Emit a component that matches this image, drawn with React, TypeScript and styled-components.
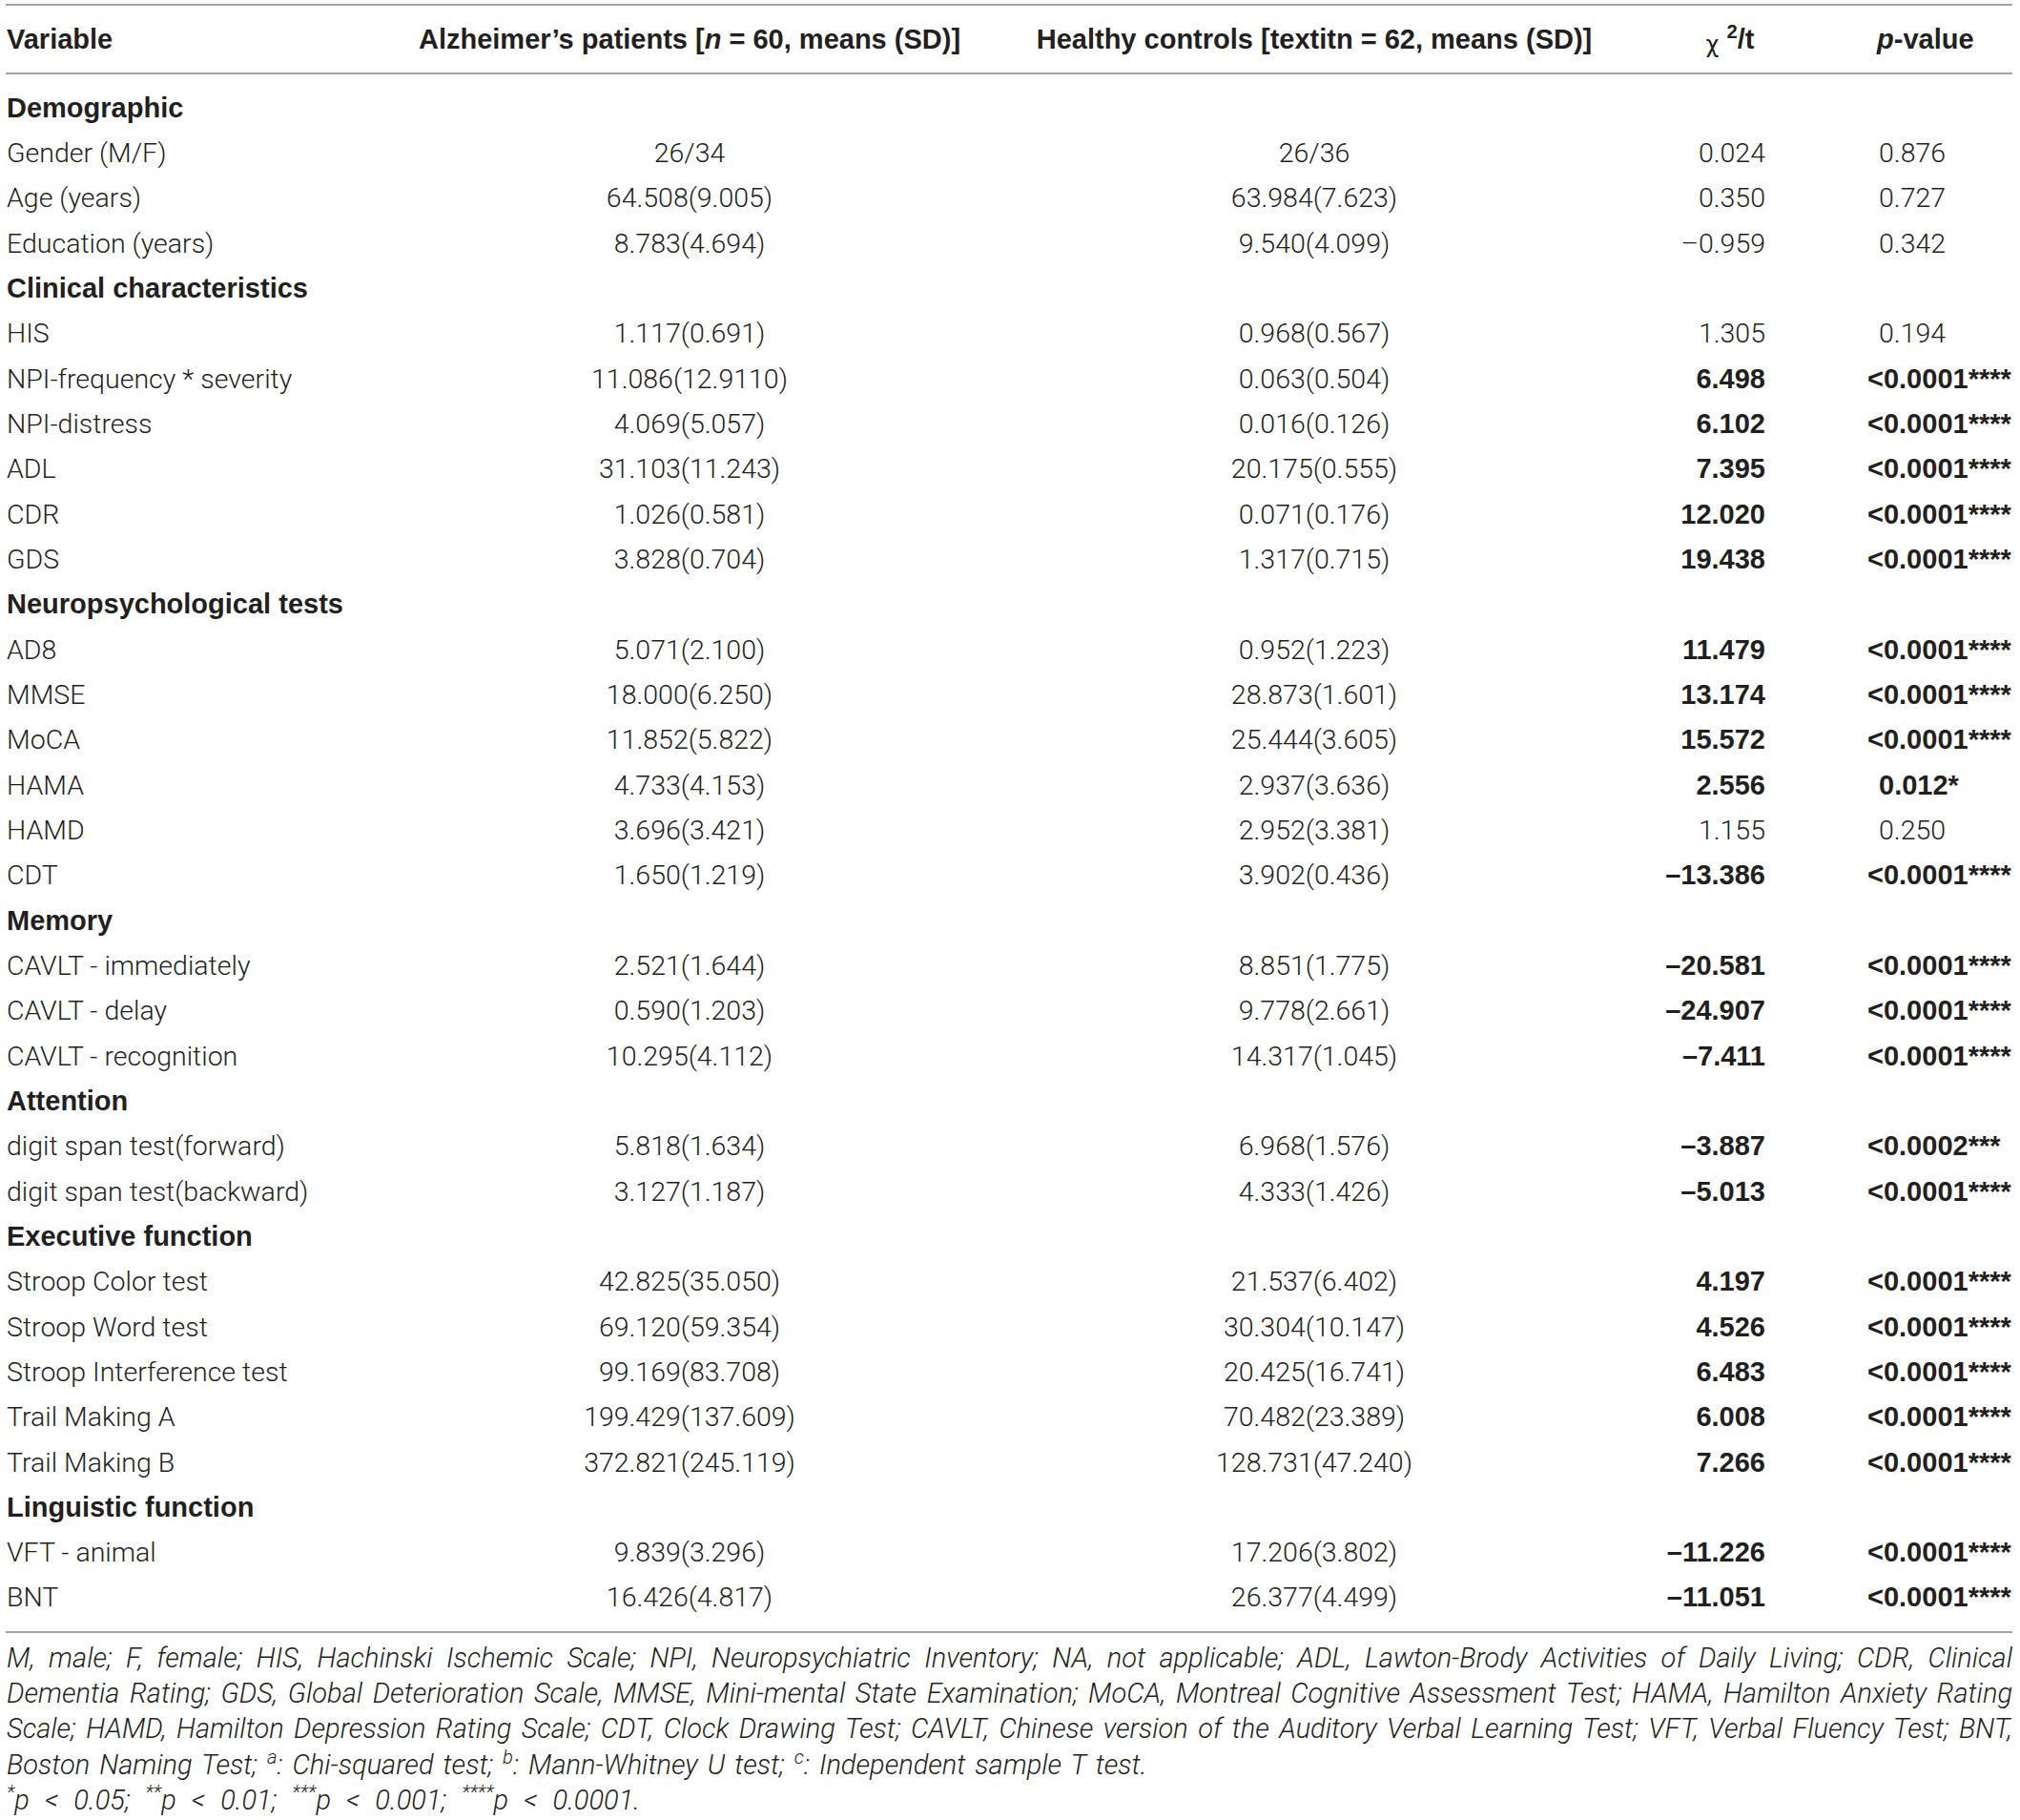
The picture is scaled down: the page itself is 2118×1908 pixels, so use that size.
import React from "react";
import styled, { createGlobalStyle } from "styled-components";

const GlobalStyle = createGlobalStyle`
  body {
    margin: 0;
    background: #ffffff;
    font-family: Roboto, "Liberation Sans", Arial, sans-serif;
    color: #231f20;
  }
`;

const COLS = "424px 586px 724px 148px 222px";
const BOLD = `"Liberation Sans", Arial, sans-serif`;

const Page = styled.div`
  padding: 4px 8px 0 6px;
  width: 2104px;
`;

const Head = styled.div`
  display: grid;
  grid-template-columns: ${COLS};
  align-items: center;
  height: 70px;
  border-top: 2px solid #a3a3a3;
  border-bottom: 2px solid #a3a3a3;
  font-family: ${BOLD};
  font-size: 29px;
  font-weight: 700;
`;

const HeadCell = styled.div<{ $align?: string; $pl?: number }>`
  text-align: ${(p) => p.$align || "center"};
  padding-left: ${(p) => p.$pl || 0}px;
  white-space: nowrap;
`;

const Chi = styled.span`
  font-weight: 400;
  font-family: "DejaVu Sans", sans-serif;
  font-size: 24px;
  position: relative;
  top: 4px;
`;

const Sup = styled.sup`
  font-size: 0.7em;
  line-height: 0;
`;

const Body = styled.div`
  padding: 11.5px 0 11px;
  border-bottom: 2px solid #a3a3a3;
`;

const Row = styled.div`
  display: grid;
  grid-template-columns: ${COLS};
  align-items: center;
  height: 47.33px;
  font-size: 28.5px;
  font-weight: 300;
  white-space: nowrap;
`;

const Label = styled.div`
  padding-left: 1px;
`;

const GroupLabel = styled.div`
  padding-left: 1px;
  font-family: ${BOLD};
  font-size: 29px;
  font-weight: 700;
`;

const Mid = styled.div`
  text-align: center;
`;

const Stat = styled.div<{ $bold?: boolean }>`
  text-align: right;
  padding-right: 37px;
  font-family: ${(p) => (p.$bold ? BOLD : "inherit")};
  font-size: ${(p) => (p.$bold ? 29 : 28.5)}px;
  font-weight: ${(p) => (p.$bold ? 700 : 300)};
`;

const PVal = styled.div<{ $bold?: boolean; $lt?: boolean }>`
  text-align: left;
  padding-left: ${(p) => (p.$lt ? 70 : 82)}px;
  font-family: ${(p) => (p.$bold ? BOLD : "inherit")};
  font-size: ${(p) => (p.$bold ? 29 : 28.5)}px;
  font-weight: ${(p) => (p.$bold ? 700 : 300)};
`;

const Notes = styled.div`
  padding-top: 8px;
  font-size: 29px;
  font-style: italic;
  font-weight: 300;
  line-height: 37.3px;
`;

const NoteLine = styled.div<{ $justify?: boolean; $spacing?: number }>`
  text-align: ${(p) => (p.$justify ? "justify" : "left")};
  text-align-last: ${(p) => (p.$justify ? "justify" : "auto")};
  word-spacing: ${(p) => p.$spacing || 0}px;
  white-space: nowrap;
  padding-left: 1px;
`;

type Item =
  | { group: string }
  | { label: string; a: string; b: string; t: string; p: string; bold?: boolean };

const data: Item[] = [
  { group: "Demographic" },
  { label: "Gender (M/F)", a: "26/34", b: "26/36", t: "0.024", p: "0.876" },
  { label: "Age (years)", a: "64.508(9.005)", b: "63.984(7.623)", t: "0.350", p: "0.727" },
  { label: "Education (years)", a: "8.783(4.694)", b: "9.540(4.099)", t: "–0.959", p: "0.342" },
  { group: "Clinical characteristics" },
  { label: "HIS", a: "1.117(0.691)", b: "0.968(0.567)", t: "1.305", p: "0.194" },
  { label: "NPI-frequency * severity", a: "11.086(12.9110)", b: "0.063(0.504)", t: "6.498", p: "<0.0001****", bold: true },
  { label: "NPI-distress", a: "4.069(5.057)", b: "0.016(0.126)", t: "6.102", p: "<0.0001****", bold: true },
  { label: "ADL", a: "31.103(11.243)", b: "20.175(0.555)", t: "7.395", p: "<0.0001****", bold: true },
  { label: "CDR", a: "1.026(0.581)", b: "0.071(0.176)", t: "12.020", p: "<0.0001****", bold: true },
  { label: "GDS", a: "3.828(0.704)", b: "1.317(0.715)", t: "19.438", p: "<0.0001****", bold: true },
  { group: "Neuropsychological tests" },
  { label: "AD8", a: "5.071(2.100)", b: "0.952(1.223)", t: "11.479", p: "<0.0001****", bold: true },
  { label: "MMSE", a: "18.000(6.250)", b: "28.873(1.601)", t: "13.174", p: "<0.0001****", bold: true },
  { label: "MoCA", a: "11.852(5.822)", b: "25.444(3.605)", t: "15.572", p: "<0.0001****", bold: true },
  { label: "HAMA", a: "4.733(4.153)", b: "2.937(3.636)", t: "2.556", p: "0.012*", bold: true },
  { label: "HAMD", a: "3.696(3.421)", b: "2.952(3.381)", t: "1.155", p: "0.250" },
  { label: "CDT", a: "1.650(1.219)", b: "3.902(0.436)", t: "–13.386", p: "<0.0001****", bold: true },
  { group: "Memory" },
  { label: "CAVLT - immediately", a: "2.521(1.644)", b: "8.851(1.775)", t: "–20.581", p: "<0.0001****", bold: true },
  { label: "CAVLT - delay", a: "0.590(1.203)", b: "9.778(2.661)", t: "–24.907", p: "<0.0001****", bold: true },
  { label: "CAVLT - recognition", a: "10.295(4.112)", b: "14.317(1.045)", t: "–7.411", p: "<0.0001****", bold: true },
  { group: "Attention" },
  { label: "digit span test(forward)", a: "5.818(1.634)", b: "6.968(1.576)", t: "–3.887", p: "<0.0002***", bold: true },
  { label: "digit span test(backward)", a: "3.127(1.187)", b: "4.333(1.426)", t: "–5.013", p: "<0.0001****", bold: true },
  { group: "Executive function" },
  { label: "Stroop Color test", a: "42.825(35.050)", b: "21.537(6.402)", t: "4.197", p: "<0.0001****", bold: true },
  { label: "Stroop Word test", a: "69.120(59.354)", b: "30.304(10.147)", t: "4.526", p: "<0.0001****", bold: true },
  { label: "Stroop Interference test", a: "99.169(83.708)", b: "20.425(16.741)", t: "6.483", p: "<0.0001****", bold: true },
  { label: "Trail Making A", a: "199.429(137.609)", b: "70.482(23.389)", t: "6.008", p: "<0.0001****", bold: true },
  { label: "Trail Making B", a: "372.821(245.119)", b: "128.731(47.240)", t: "7.266", p: "<0.0001****", bold: true },
  { group: "Linguistic function" },
  { label: "VFT - animal", a: "9.839(3.296)", b: "17.206(3.802)", t: "–11.226", p: "<0.0001****", bold: true },
  { label: "BNT", a: "16.426(4.817)", b: "26.377(4.499)", t: "–11.051", p: "<0.0001****", bold: true },
];

const App = () => {
  return (
    <Page>
      <GlobalStyle />
      <Head>
        <HeadCell $align="left" $pl={1}>Variable</HeadCell>
        <HeadCell>
          Alzheimer’s patients [<i>n</i> = 60, means (SD)]
        </HeadCell>
        <HeadCell>Healthy controls [textitn = 62, means (SD)]</HeadCell>
        <HeadCell>
          <Chi>χ</Chi> <Sup>2</Sup>/t
        </HeadCell>
        <HeadCell $align="left" $pl={80}>
          <i>p</i>-value
        </HeadCell>
      </Head>
      <Body>
        {data.map((d, i) =>
          "group" in d ? (
            <Row key={i}>
              <GroupLabel>{d.group}</GroupLabel>
            </Row>
          ) : (
            <Row key={i}>
              <Label>{d.label}</Label>
              <Mid>{d.a}</Mid>
              <Mid>{d.b}</Mid>
              <Stat $bold={d.bold}>{d.t}</Stat>
              <PVal $bold={d.bold} $lt={d.p.startsWith("<")}>
                {d.p}
              </PVal>
            </Row>
          )
        )}
      </Body>
      <Notes>
        <NoteLine $justify>
          M, male; F, female; HIS, Hachinski Ischemic Scale; NPI, Neuropsychiatric Inventory; NA, not applicable; ADL, Lawton-Brody Activities of Daily Living; CDR, Clinical
        </NoteLine>
        <NoteLine $justify>
          Dementia Rating; GDS, Global Deterioration Scale, MMSE, Mini-mental State Examination; MoCA, Montreal Cognitive Assessment Test; HAMA, Hamilton Anxiety Rating
        </NoteLine>
        <NoteLine $justify>
          Scale; HAMD, Hamilton Depression Rating Scale; CDT, Clock Drawing Test; CAVLT, Chinese version of the Auditory Verbal Learning Test; VFT, Verbal Fluency Test; BNT,
        </NoteLine>
        <NoteLine $spacing={3}>
          Boston Naming Test; <Sup>a</Sup>: Chi-squared test; <Sup>b</Sup>: Mann-Whitney U test; <Sup>c</Sup>: Independent sample T test.
        </NoteLine>
        <NoteLine $spacing={9}>
          <Sup>*</Sup>p &lt; 0.05; <Sup>**</Sup>p &lt; 0.01; <Sup>***</Sup>p &lt; 0.001; <Sup>****</Sup>p &lt; 0.0001.
        </NoteLine>
      </Notes>
    </Page>
  );
};

export default App;
